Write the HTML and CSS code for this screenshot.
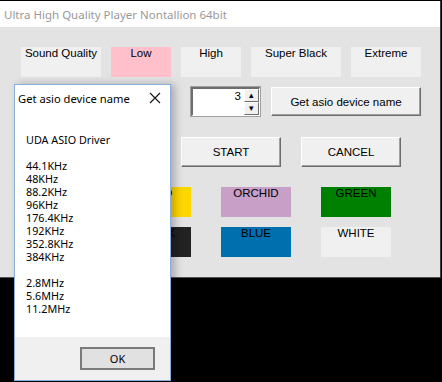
FILE: index.html
```html
<!DOCTYPE html>
<html lang="en">
<head>
  <meta charset="UTF-8" />
  <title>Ultra High Quality Player Nontallion 64bit</title>
  <link rel="stylesheet" href="styles.css">
</head>
<body>
  <div class="main-window">
    <div class="titlebar">Ultra High Quality Player Nontallion 64bit</div>
    <div class="client">
      <div class="row row-quality">
        <div class="label w80">Sound Quality</div>
        <div class="label w60 pink">Low</div>
        <div class="label w60">High</div>
        <div class="label w90">Super Black</div>
        <div class="label w70">Extreme</div>
      </div>

      <div class="row row-device">
        <div class="spin">
          <div class="spin-value">3</div>
          <div class="spin-buttons">
            <div class="spin-btn">&#9652;</div>
            <div class="spin-btn">&#9662;</div>
          </div>
        </div>
        <button class="btn w150">Get asio device name</button>
      </div>

      <div class="row row-actions">
        <button class="btn w100">START</button>
        <button class="btn w100">CANCEL</button>
      </div>

      <div class="row row-colors">
        <div class="swatch yellow">GOLD</div>
        <div class="swatch orchid">ORCHID</div>
        <div class="swatch green">GREEN</div>
      </div>
      <div class="row row-colors second">
        <div class="swatch black">BLACK</div>
        <div class="swatch blue">BLUE</div>
        <div class="swatch white">WHITE</div>
      </div>
    </div>
  </div>

  <div class="dialog">
    <div class="dialog-title">
      <span>Get asio device name</span>
      <svg class="close" width="12" height="12" viewBox="0 0 12 12">
        <path d="M1 1 L11 11 M11 1 L1 11" stroke="#111" stroke-width="1.1" fill="none"/>
      </svg>
    </div>
    <div class="dialog-body">UDA ASIO Driver

44.1KHz
48KHz
88.2KHz
96KHz
176.4KHz
192KHz
352.8KHz
384KHz

2.8MHz
5.6MHz
11.2MHz</div>
    <div class="dialog-footer">
      <button class="ok">OK</button>
    </div>
  </div>
</body>
</html>
```

FILE: styles.css
```css
body {
  margin: 0;
  background: #000;
  width: 442px;
  height: 382px;
  overflow: hidden;
  position: relative;
  font-family: "Liberation Sans", Arial, sans-serif;
  font-size: 11.5px;
  color: #000;
}
.main-window {
  margin-top: 1px;
  width: 440px;
  border-right: 1px solid #3c3c3c;
  background: #e3e3e3;
}
.titlebar {
  height: 26px;
  line-height: 28px;
  padding-left: 4px;
  background: #fff;
  color: #999;
  font-family: "Noto Sans", "Open Sans", sans-serif;
  font-size: 11.5px;
}
.client {
  padding: 20px 0 20px 0;
  border-bottom: 1px solid #555;
}
.row {
  display: flex;
}
.row-quality {
  padding-left: 21px;
  gap: 10px;
}
.label {
  height: 30px;
  background: #f0f0f0;
  text-align: center;
  line-height: 12px;
}
.label.pink {
  background: #ffc0cb;
}
.w60 { width: 60px; }
.w70 { width: 70px; }
.w80 { width: 80px; }
.w90 { width: 90px; }
.w100 { width: 100px; }
.w150 { width: 150px; }

.row-device {
  margin-top: 10px;
  padding-left: 191px;
  gap: 11px;
}
.spin {
  width: 69px;
  height: 29px;
  box-sizing: border-box;
  background: #fff;
  border-top: 2px solid #6d6d6d;
  border-left: 2px solid #6d6d6d;
  border-right: 1px solid #fff;
  border-bottom: 1px solid #fff;
  outline: 1px solid #a0a0a0;
  display: flex;
}
.spin-value {
  flex: 1;
  text-align: right;
  padding-right: 3px;
  line-height: 15px;
}
.spin-buttons {
  width: 15px;
  display: flex;
  flex-direction: column;
}
.spin-btn {
  flex: 1;
  background: #f0f0f0;
  border: 1px solid;
  border-color: #fff #6d6d6d #6d6d6d #fff;
  font-size: 9px;
  line-height: 11px;
  text-align: center;
}
.btn {
  height: 30px;
  background: #f0f0f0;
  border: 1px solid;
  border-color: #fff #6d6d6d #6d6d6d #fff;
  box-shadow: inset -1px -1px 0 #a0a0a0;
  font-family: "Liberation Sans", Arial, sans-serif;
  font-size: 11.5px;
  color: #000;
  padding: 0;
}
.row-device .btn {
  height: 29px;
}
.row-actions {
  margin-top: 21px;
  padding-left: 181px;
  gap: 20px;
}
.row-colors {
  margin-top: 20px;
  padding-left: 121px;
  gap: 30px;
}
.row-colors.second {
  margin-top: 10px;
}
.swatch {
  width: 70px;
  height: 30px;
  text-align: center;
  line-height: 12px;
}
.yellow { background: #ffd700; }
.orchid { background: #c79fc7; }
.green { background: #008000; }
.black { background: #222; }
.blue { background: #006fae; }
.white { background: #f0f0f0; }

.dialog {
  position: absolute;
  left: 14px;
  top: 84px;
  width: 157px;
  height: 297px;
  box-sizing: border-box;
  border: 1px solid #8aaedb;
  background: #fff;
  box-shadow: 4px 0 8px rgba(0, 0, 0, 0.25);
  display: flex;
  flex-direction: column;
  font-family: "Noto Sans", "Open Sans", sans-serif;
  font-size: 10.8px;
}
.dialog-title {
  height: 26px;
  display: flex;
  align-items: center;
  justify-content: space-between;
  padding: 0 9px 0 3px;
  font-size: 11.2px;
}
.close {
  display: block;
}
.dialog-body {
  flex: 1;
  white-space: pre;
  padding: 22px 0 0 11px;
  line-height: 13px;
}
.dialog-footer {
  height: 43px;
  background: #f0f0f0;
  display: flex;
  justify-content: flex-end;
  align-items: center;
  padding-right: 15px;
}
.ok {
  width: 75px;
  height: 23px;
  background: #e1e1e1;
  border: 2px solid #7a7a7a;
  font-family: "Noto Sans", "Open Sans", sans-serif;
  font-size: 11px;
  color: #000;
  padding: 0;
  margin-top: -1px;
}
```
